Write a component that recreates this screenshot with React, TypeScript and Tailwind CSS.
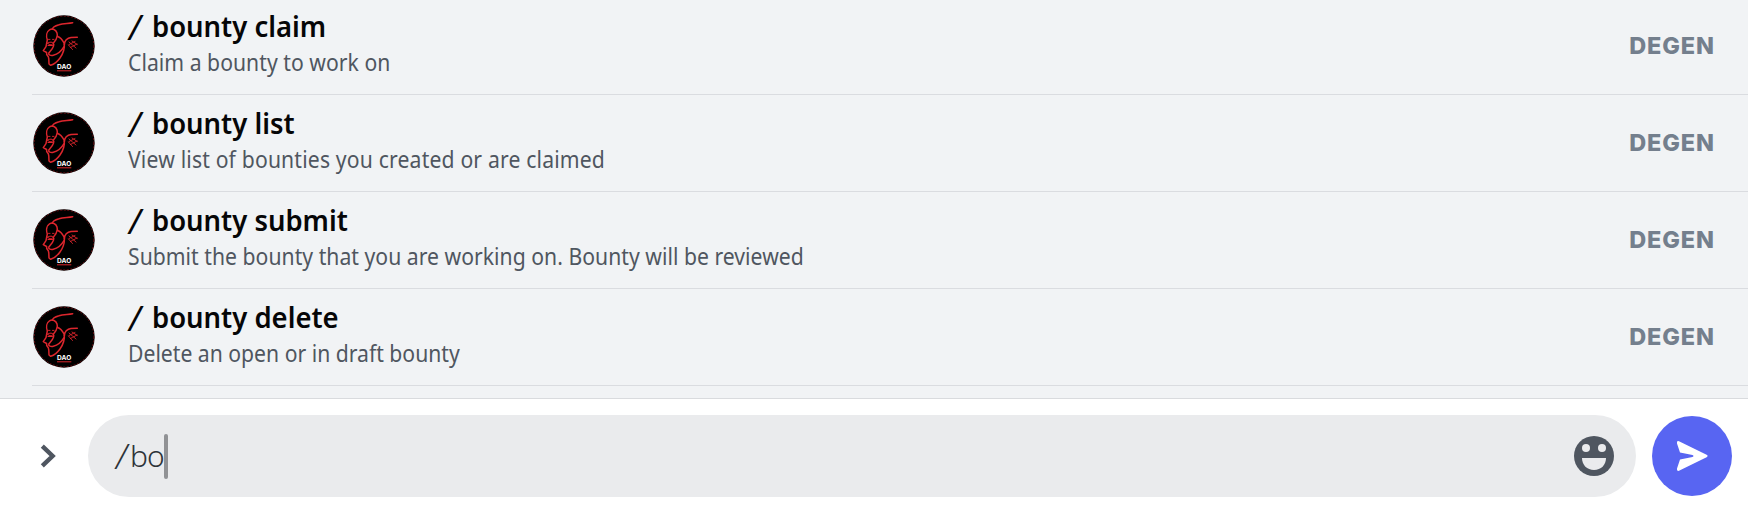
const commands = [
  {
    name: "bounty claim",
    description: "Claim a bounty to work on",
    textSpacing: "tracking-[0.04px]",
  },
  {
    name: "bounty list",
    description: "View list of bounties you created or are claimed",
    textSpacing: "tracking-[0.18px]",
  },
  {
    name: "bounty submit",
    description:
      "Submit the bounty that you are working on. Bounty will be reviewed",
    textSpacing: "tracking-[0.03px]",
  },
  {
    name: "bounty delete",
    description: "Delete an open or in draft bounty",
    textSpacing: "tracking-normal",
  },
];

function BotAvatar() {
  return (
    <svg viewBox="0 0 62 62" className="w-[62px] h-[62px] shrink-0">
      <circle cx="31" cy="31" r="30.7" fill="#000" />
      <circle
        cx="31"
        cy="31"
        r="29.8"
        fill="none"
        stroke="#8f1419"
        strokeWidth="0.7"
        strokeDasharray="2 1.5"
      />
      <g
        fill="none"
        stroke="#dc262d"
        strokeWidth="1.5"
        strokeLinecap="round"
        strokeLinejoin="round"
      >
        <path d="M39.7 7.7 C35 8.6 30 8.4 26 9.7 C21.5 11 19.6 12 19.3 14.3" />
        <path d="M14.3 25 C13 21 13.5 16.5 16.5 14.8 C19.5 13.2 23 14.4 24 18 L24.5 21.5 C28 22.3 29.5 25 31.3 28.5 C31.8 33 30.5 38 27 43 C24.5 46.5 21.5 49 17.7 50.3 L16 49 L15.8 44 L15.3 41.7 L13.7 39.5 L13.6 37.5 L10.3 35.7 L13 31.7 L14.3 25 Z" />
        <path d="M24.2 21 C23.8 24 22 26.5 20.3 28.2 C22.5 31 18.5 34.5 15.8 38 C15 40 18 41 20.3 40.3 C24 39.5 28.5 36 31 31.7" />
        <path d="M31.3 30 C31 26 34.5 22.8 38 22.4 L44.3 22.2" />
        <path
          d="M14.5 28.2 C17 26.5 19.5 27 20.3 28.2 C19.5 30 16.8 30.5 14.5 28.2 M15 30.5 L19.5 30.5"
          strokeWidth="1"
        />
        <path
          d="M36 27 L43 33 M39 26 L44.3 29.5 M35.5 30 L39.5 34.5 M36 29.5 L42 26.5 M37.5 32.5 L44 29"
          strokeWidth="0.9"
          strokeDasharray="2 0.8"
        />
        <path d="M15.5 24.4 h1.5 M19.5 24.4 h1.5" strokeWidth="0.9" />
      </g>
      <text
        x="24"
        y="54"
        textLength="14.3"
        className="font-['Inter',sans-serif] font-bold"
        fontSize="6.6"
        fill="#fff"
      >
        DAO
      </text>
      <path d="M24 55.8 H38.3" stroke="#dc262d" strokeWidth="1" />
    </svg>
  );
}

function CommandRow({ command }: { command: (typeof commands)[number] }) {
  return (
    <div className="flex items-center h-[97px] shrink-0 ml-8 border-b border-[#dadce0] pr-[34px]">
      <div className="w-24 pl-px shrink-0">
        <BotAvatar />
      </div>

      <div className="flex-1 whitespace-nowrap pb-1">
        <div className="flex h-9 items-center text-[29px] font-semibold leading-9 text-[#060607]">
          <span className="w-[23.5px] pl-px text-[35px] font-normal translate-y-px -skew-x-[9deg]">
            /
          </span>
          <span className="origin-left scale-x-[0.946]">{command.name}</span>
        </div>

        <div
          className={`text-[23px] leading-9 text-[#4f5660] origin-left scale-x-[0.92] ${command.textSpacing}`}
        >
          {command.description}
        </div>
      </div>

      <span className="font-['Inter',sans-serif] text-[23.5px] font-extrabold tracking-[0.9px] -mr-px text-[#747f8d]">
        DEGEN
      </span>
    </div>
  );
}

function Composer() {
  return (
    <div className="flex items-center h-[115px] border-t border-[#d9dbde] bg-white pl-8 pr-4">
      <button className="w-14 shrink-0">
        <svg
          viewBox="0 0 32 32"
          className="w-8 h-8"
          fill="none"
          stroke="#4f5660"
          strokeWidth="4.4"
        >
          <path d="M10.3 6.2 L20.6 16 L10.3 25.8" />
        </svg>
      </button>

      <div className="flex flex-1 items-center h-[82px] rounded-full bg-[#eaebed] pl-[27px] pr-[22px]">
        <div className="flex items-center w-[49px] text-[30px] leading-9 font-light text-[#2e3338]">
          <span className="w-[17px] pl-px text-[35px] leading-9 -skew-x-[9deg]">/</span>
          <span className="tracking-[-0.8px]">bo</span>
        </div>
        <span className="w-1 h-[45px] rounded-full bg-[#919295]" />

        <svg viewBox="0 0 40 40" className="w-10 h-10 ml-auto">
          <circle cx="20" cy="20" r="20" fill="#4f5660" />
          <circle cx="12" cy="12" r="4" fill="#eaebed" />
          <circle cx="28" cy="12" r="4" fill="#eaebed" />
          <path d="M8 22 H32 C32 29 27 34 20 34 C13 34 8 29 8 22 Z" fill="#eaebed" />
        </svg>
      </div>

      <button className="w-20 h-20 ml-4 rounded-full bg-[#5865f2] shrink-0">
        <svg viewBox="0 0 80 80" className="w-20 h-20">
          <path
            d="M27 25.2 L54.6 38.8 Q56.6 40 54.6 41.2 L27 54.8 Q24.4 55.4 25 52.6 L28 43.4 L40.5 41 Q42.5 40 40.5 39 L28 36.6 L25 27.4 Q24.4 24.6 27 25.2 Z"
            fill="#fff"
          />
        </svg>
      </button>
    </div>
  );
}

function App() {
  return (
    <main className="h-[513px] overflow-hidden bg-white font-['Noto_Sans',sans-serif]">
      <div className="flex flex-col justify-end h-[398px] overflow-hidden bg-[#f1f3f5] pb-3">
        {commands.map((command) => (
          <CommandRow key={command.name} command={command} />
        ))}
      </div>

      <Composer />
    </main>
  );
}

export default App;
